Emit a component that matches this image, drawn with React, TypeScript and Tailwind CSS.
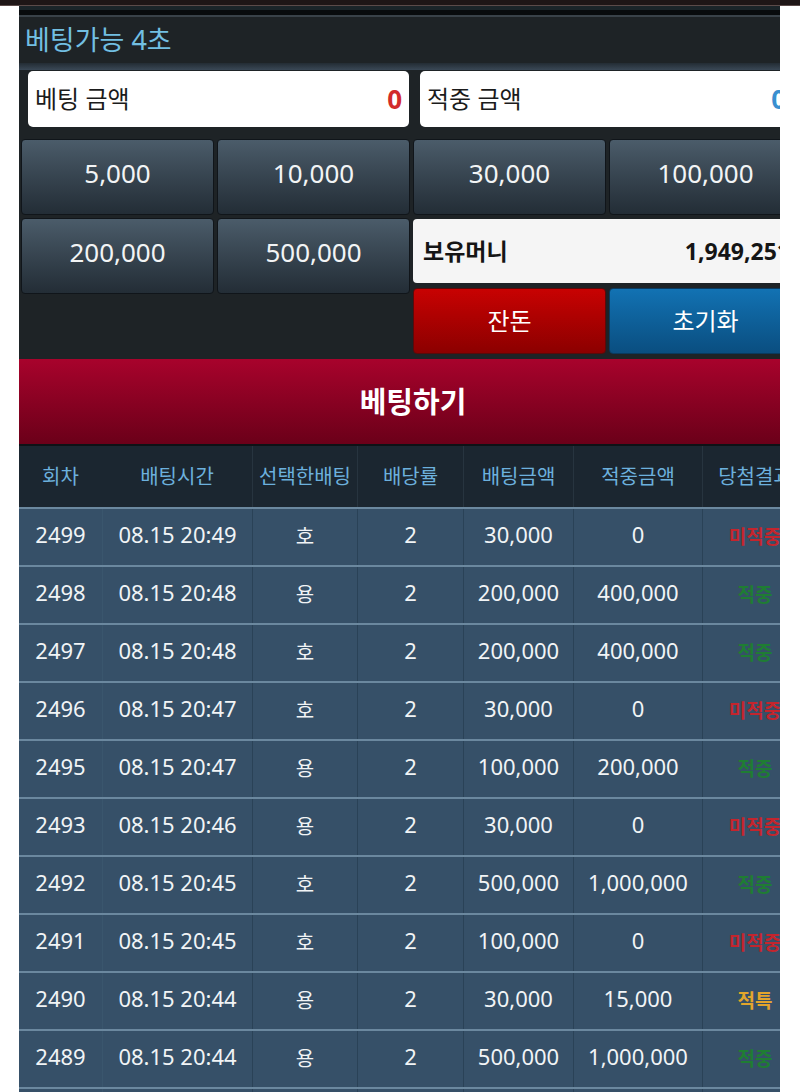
import React from "react";

const font = { fontFamily: '"Noto Sans", "Noto Sans CJK KR", sans-serif' };

type Row = {
  no: number;
  time: string;
  pick: string;
  rate: number;
  bet: string;
  win: string;
  result: "미적중" | "적중" | "적특";
};

const rows: Row[] = [
  { no: 2499, time: "08.15 20:49", pick: "호", rate: 2, bet: "30,000", win: "0", result: "미적중" },
  { no: 2498, time: "08.15 20:48", pick: "용", rate: 2, bet: "200,000", win: "400,000", result: "적중" },
  { no: 2497, time: "08.15 20:48", pick: "호", rate: 2, bet: "200,000", win: "400,000", result: "적중" },
  { no: 2496, time: "08.15 20:47", pick: "호", rate: 2, bet: "30,000", win: "0", result: "미적중" },
  { no: 2495, time: "08.15 20:47", pick: "용", rate: 2, bet: "100,000", win: "200,000", result: "적중" },
  { no: 2493, time: "08.15 20:46", pick: "용", rate: 2, bet: "30,000", win: "0", result: "미적중" },
  { no: 2492, time: "08.15 20:45", pick: "호", rate: 2, bet: "500,000", win: "1,000,000", result: "적중" },
  { no: 2491, time: "08.15 20:45", pick: "호", rate: 2, bet: "100,000", win: "0", result: "미적중" },
  { no: 2490, time: "08.15 20:44", pick: "용", rate: 2, bet: "30,000", win: "15,000", result: "적특" },
  { no: 2489, time: "08.15 20:44", pick: "용", rate: 2, bet: "500,000", win: "1,000,000", result: "적중" },
  { no: 2488, time: "08.15 20:43", pick: "호", rate: 2, bet: "30,000", win: "0", result: "미적중" },
];

const cols = "grid grid-cols-[83px_150px_105px_106px_110px_129px_105px]";

function ChipButton({ label }: { label: string }) {
  return (
    <button className="h-[76px] rounded-[4px] border border-[#10151a] bg-gradient-to-b from-[#4b5c6a] to-[#232d36] pb-[7px] text-[26px] text-[#f2f4f5]">
      {label}
    </button>
  );
}

function ResultText({ result }: { result: Row["result"] }) {
  const color =
    result === "적중" ? "text-[#1f7d33]" : result === "적특" ? "text-[#e3a52c]" : "text-[#c4252d]";
  return <span className={`text-[19px] font-bold ${color}`}>{result}</span>;
}

export default function App() {
  return (
    <div className="min-h-[1092px] w-[800px] bg-white" style={font}>
      {/* top strip */}
      <div className="h-[6px] border-b border-[#5b4b49] bg-[#1e1616]" />

      <div className="ml-[19px] w-[761px] overflow-hidden">
        <div className="w-[788px]">
          <div className="h-[4px] bg-[#1b2529]" />
          <div className="h-[5px] bg-[#080b0d]" />
          <div className="h-[2px] bg-[#394249]" />

          {/* title */}
          <div className="flex h-[46px] items-center bg-[#1e2326] px-[6px] text-[27px] text-[#72bfe2]">
            베팅가능 4초
          </div>
          <div className="h-[7px] bg-gradient-to-b from-[#232c34] to-[#3a4856]" />

          {/* controls */}
          <div className="bg-[#1e2326] pb-[5px]">
            <div className="flex gap-[11px] pl-[9px] pt-[1px]">
              <div className="flex h-[56px] w-[381px] items-center justify-between rounded-[5px] bg-white px-[7px]">
                <span className="text-[24px] text-[#1b1b1b]">베팅 금액</span>
                <span className="text-[26px] font-bold text-[#d22b2b]">0</span>
              </div>
              <div className="flex h-[56px] w-[381px] items-center justify-between rounded-[5px] bg-white pl-[7px] pr-[15px]">
                <span className="text-[24px] text-[#1b1b1b]">적중 금액</span>
                <span className="text-[26px] font-bold text-[#3a8fd0]">0</span>
              </div>
            </div>

            <div className="mt-[12px] grid grid-cols-[193px_193px_193px_193px] gap-[3px] px-[2px]">
              <ChipButton label="5,000" />
              <ChipButton label="10,000" />
              <ChipButton label="30,000" />
              <ChipButton label="100,000" />
            </div>

            <div className="mt-[3px] flex gap-[3px] px-[2px]">
              <div className="grid grid-cols-[193px_193px] gap-[3px] self-start">
                <ChipButton label="200,000" />
                <ChipButton label="500,000" />
              </div>
              <div className="flex w-[389px] flex-col gap-[5px] pt-[1px]">
                <div className="flex h-[64px] items-center justify-between rounded-[4px] bg-[#f5f5f5] pl-[10px] pr-[12px]">
                  <span className="text-[23px] font-bold text-[#151515]">보유머니</span>
                  <span className="text-[23px] font-bold text-[#151515]">1,949,251</span>
                </div>
                <div className="grid grid-cols-[193px_193px] gap-[3px]">
                  <button className="h-[66px] rounded-[4px] border border-[#5a0a0a] bg-gradient-to-b from-[#c80202] to-[#8c0000] text-[24px] text-white">
                    잔돈
                  </button>
                  <button className="h-[66px] rounded-[4px] border border-[#0a3a5e] bg-gradient-to-b from-[#1272b3] to-[#0a4e80] text-[24px] text-white">
                    초기화
                  </button>
                </div>
              </div>
            </div>
          </div>

          {/* bet button */}
          <button className="flex h-[85px] w-full items-center justify-center bg-gradient-to-b from-[#a8032c] to-[#6b0019] text-[29px] font-bold text-white">
            베팅하기
          </button>
          <div className="h-[2px] bg-[#0e1216]" />

          {/* history table */}
          <div className={`${cols} h-[61px] bg-[#1b2630] text-[20px] text-[#6cb0dd]`}>
            {["회차", "배팅시간", "선택한배팅", "배당률", "배팅금액", "적중금액", "당첨결과"].map((h, i) => (
              <div
                key={h}
                className={`flex items-center justify-center whitespace-nowrap ${i > 1 ? "border-l border-[#27343f]" : ""}`}
              >
                {h}
              </div>
            ))}
          </div>

          {rows.map((r) => (
            <div
              key={r.no}
              className={`${cols} h-[58px] border-t-2 border-[#6b889f] bg-[#365068] text-[22px] text-[#f1f4f6]`}
            >
              <div className="flex items-center justify-center pb-[5px]">{r.no}</div>
              <div className="flex items-center justify-center whitespace-nowrap border-l border-[#3a566d] pb-[5px]">
                {r.time}
              </div>
              <div className="flex items-center justify-center border-l border-[#2a4257] text-[20px]">{r.pick}</div>
              <div className="flex items-center justify-center border-l border-[#2a4257] pb-[5px]">{r.rate}</div>
              <div className="flex items-center justify-center border-l border-[#2a4257] pb-[5px]">{r.bet}</div>
              <div className="flex items-center justify-center border-l border-[#2a4257] pb-[5px]">{r.win}</div>
              <div className="flex items-center justify-center whitespace-nowrap border-l border-[#2a4257]">
                <ResultText result={r.result} />
              </div>
            </div>
          ))}
        </div>
      </div>
    </div>
  );
}
